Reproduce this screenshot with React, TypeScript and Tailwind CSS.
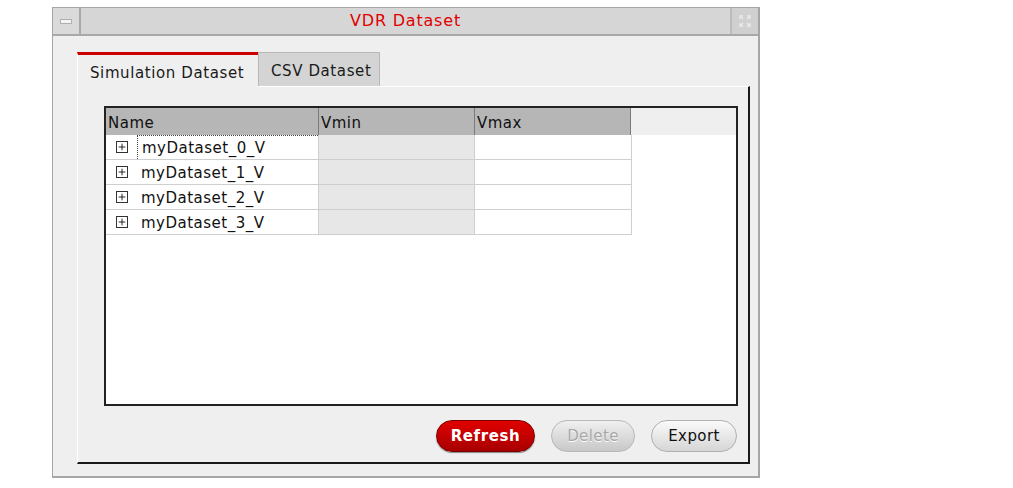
import { Plus } from "lucide-react";

const rows = ["myDataset_0_V", "myDataset_1_V", "myDataset_2_V", "myDataset_3_V"];

function TreeBox() {
  return (
    <span className="w-[12px] h-[12px] border border-[#333] bg-white flex items-center justify-center shrink-0">
      <Plus size={10} strokeWidth={2.2} className="text-[#111]" />
    </span>
  );
}

export default function App() {
  return (
    <div className="w-[1013px] h-[488px] bg-white pt-[7px] pl-[52px]" style={{ fontFamily: '"DejaVu Sans", sans-serif' }}>
      <div className="w-[708px] h-[471px] border border-[#a6a6a6] border-b-2 border-r-2 bg-[#efefef] flex flex-col">
        {/* title bar */}
        <div className="h-[28px] flex bg-[#d6d6d6] border-b-2 border-[#a8a8a8]">
          <div className="w-[28px] h-full border-r-2 border-[#a8a8a8] bg-[#dadada] flex items-center justify-center">
            <span className="w-[12px] h-[5px] bg-[#f4f4f4] border border-[#b0b0b0]" />
          </div>
          <div className="flex-1 flex items-center justify-center text-[16px] tracking-[0.8px] text-[#e00000]">VDR Dataset</div>
          <div className="w-[28px] h-full border-l-2 border-[#bcbcbc] bg-[#d0d0d0] flex items-center justify-center">
            <svg width="14" height="14" viewBox="0 0 14 14" fill="none" stroke="#eaeaea" strokeWidth="1.4">
              <path d="M2 2 L5 5 M12 2 L9 5 M2 12 L5 9 M12 12 L9 9" />
              <path d="M5 2 L2 2 L2 5 M9 2 L12 2 L12 5 M2 9 L2 12 L5 12 M12 9 L12 12 L9 12" />
            </svg>
          </div>
        </div>

        {/* body */}
        <div className="flex-1 pt-[15px] pl-[24px] pr-[8px] pb-[12px] flex flex-col">
          <div className="flex items-end h-[35px]">
            <div className="w-[181px] h-[35px] border-t-[3px] border-[#cc0000] border-l border-l-white bg-[#efefef] flex items-center pl-[12px] pt-[4px] text-[15px] tracking-[0.6px] text-[#1a1a1a] relative z-10 -mb-px">
              Simulation Dataset
            </div>
            <div className="w-[122px] h-[34px] bg-[#d4d4d4] border border-[#b8b8b8] border-b-0 flex items-center pl-[12px] pt-[4px] text-[15px] tracking-[0.6px] text-[#1a1a1a]">
              CSV Dataset
            </div>
          </div>

          <div className="flex-1 border-l border-t border-white border-r-2 border-b-2 border-r-[#1a1a1a] border-b-[#1a1a1a] pl-[26px] pt-[19px] pr-[10px] pb-[10px] flex flex-col">
            {/* table */}
            <div className="h-[300px] border-2 border-[#222] bg-white flex flex-col text-[15px] tracking-[0.5px] text-[#111]">
              <div className="flex h-[27px] bg-[#efefef]">
                <div className="w-[213px] bg-[#b6b6b6] border-r border-[#7a7a7a] flex items-center pl-[2px] pt-[3px]">Name</div>
                <div className="w-[156px] bg-[#b6b6b6] border-r border-[#7a7a7a] flex items-center pl-[2px] pt-[3px]">Vmin</div>
                <div className="w-[156px] bg-[#b6b6b6] border-r border-[#7a7a7a] flex items-center pl-[2px] pt-[3px]">Vmax</div>
              </div>
              {rows.map((r, i) => (
                <div key={r} className="flex h-[25px]">
                  <div className="w-[213px] border-r border-b border-[#cfcfcf] flex items-center pl-[10px] gap-[9px]">
                    <TreeBox />
                    <span className={`h-full flex items-center pl-[4px] pt-[2px] ${i === 0 ? "border-l border-t border-dotted border-[#444] flex-1" : ""}`}>{r}</span>
                  </div>
                  <div className="w-[156px] bg-[#e7e7e7] border-r border-b border-[#cfcfcf]" />
                  <div className="w-[157px] border-r border-b border-[#cfcfcf]" />
                </div>
              ))}
            </div>

            {/* buttons */}
            <div className="mt-[14px] flex justify-end gap-[16px] pr-[1px]">
              <button className="w-[99px] h-[32px] rounded-full border border-[#7a0000] bg-gradient-to-b from-[#e00000] to-[#a80000] text-white font-bold text-[15px] tracking-[0.6px] shadow-[0_1px_1px_#888]">
                Refresh
              </button>
              <button className="w-[84px] h-[32px] rounded-full border border-[#b8b8b8] bg-gradient-to-b from-[#f0f0f0] to-[#c8c8c8] text-[#a8a8a8] text-[15px] tracking-[0.4px] [text-shadow:0_1px_0_#fff]">
                Delete
              </button>
              <button className="w-[86px] h-[32px] rounded-full border border-[#b0b0b0] bg-gradient-to-b from-[#fafafa] to-[#d6d6d6] text-[#111] text-[15px] tracking-[0.4px]">
                Export
              </button>
            </div>
          </div>
        </div>
      </div>
    </div>
  );
}
